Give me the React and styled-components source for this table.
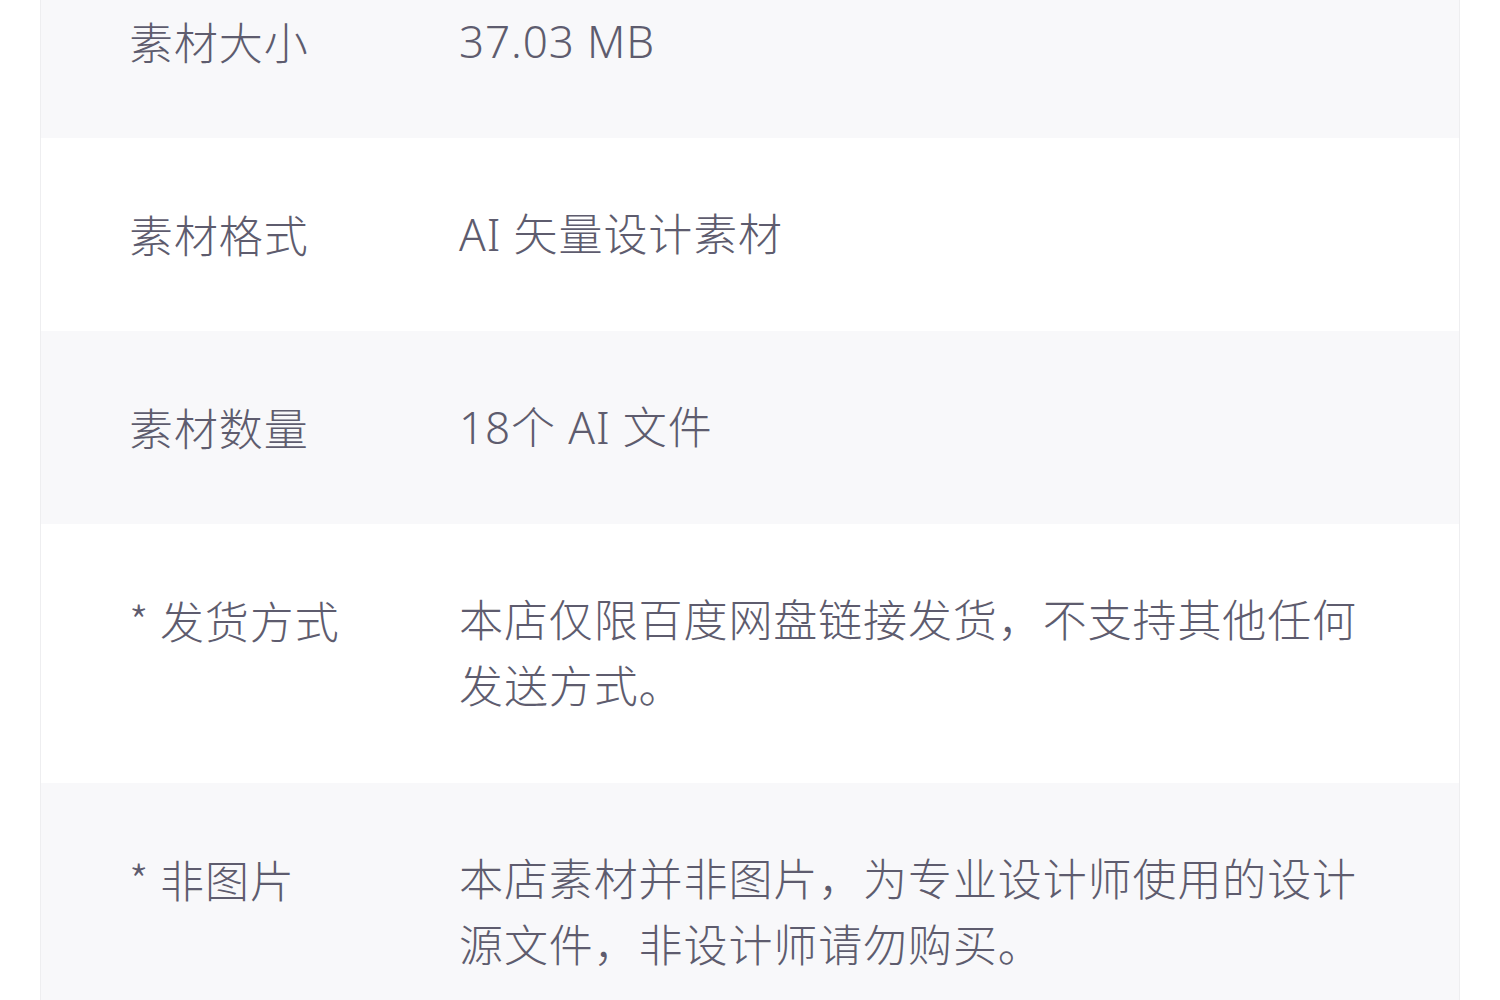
import styled, { createGlobalStyle } from "styled-components";

const GlobalStyle = createGlobalStyle`
  html, body {
    margin: 0;
    padding: 0;
    background: #ffffff;
    overflow: hidden;
  }
  body {
    font-family: "Noto Sans", "Noto Sans CJK SC", sans-serif;
  }
`;

const Page = styled.div`
  width: 1500px;
  height: 1000px;
  padding: 0 40px;
  box-sizing: border-box;
  overflow: hidden;
`;

const Table = styled.div`
  margin-top: -55px;
  display: flex;
  flex-direction: column;
  border-left: 1px solid #eeeef0;
  border-right: 1px solid #eeeef0;
`;

const Row = styled.div`
  display: flex;
  align-items: flex-start;
  padding: 63px 80px 64px 88px;
  background: ${(p) => (p.$shaded ? "#f8f8fa" : "#ffffff")};
  font-size: 44px;
  font-weight: 300;
  line-height: 66px;
  letter-spacing: 0.9px;
  color: #5e5c6e;
`;

const Label = styled.div`
  width: 330px;
  flex-shrink: 0;
  font-family: "Noto Sans CJK SC", "Noto Sans", sans-serif;
`;

const Value = styled.div`
  flex: 1;
  max-width: 920px;
`;

const rows = [
  { label: "素材大小", value: "37.03 MB" },
  { label: "素材格式", value: "AI 矢量设计素材" },
  { label: "素材数量", value: "18个 AI 文件" },
  {
    label: "* 发货方式",
    value: "本店仅限百度网盘链接发货，不支持其他任何发送方式。",
  },
  {
    label: "* 非图片",
    value: "本店素材并非图片，为专业设计师使用的设计源文件，非设计师请勿购买。",
  },
];

export default function App() {
  return (
    <>
      <GlobalStyle />
      <Page>
        <Table>
          {rows.map((row, i) => (
            <Row key={row.label} $shaded={i % 2 === 0}>
              <Label>{row.label}</Label>
              <Value>{row.value}</Value>
            </Row>
          ))}
        </Table>
      </Page>
    </>
  );
}
